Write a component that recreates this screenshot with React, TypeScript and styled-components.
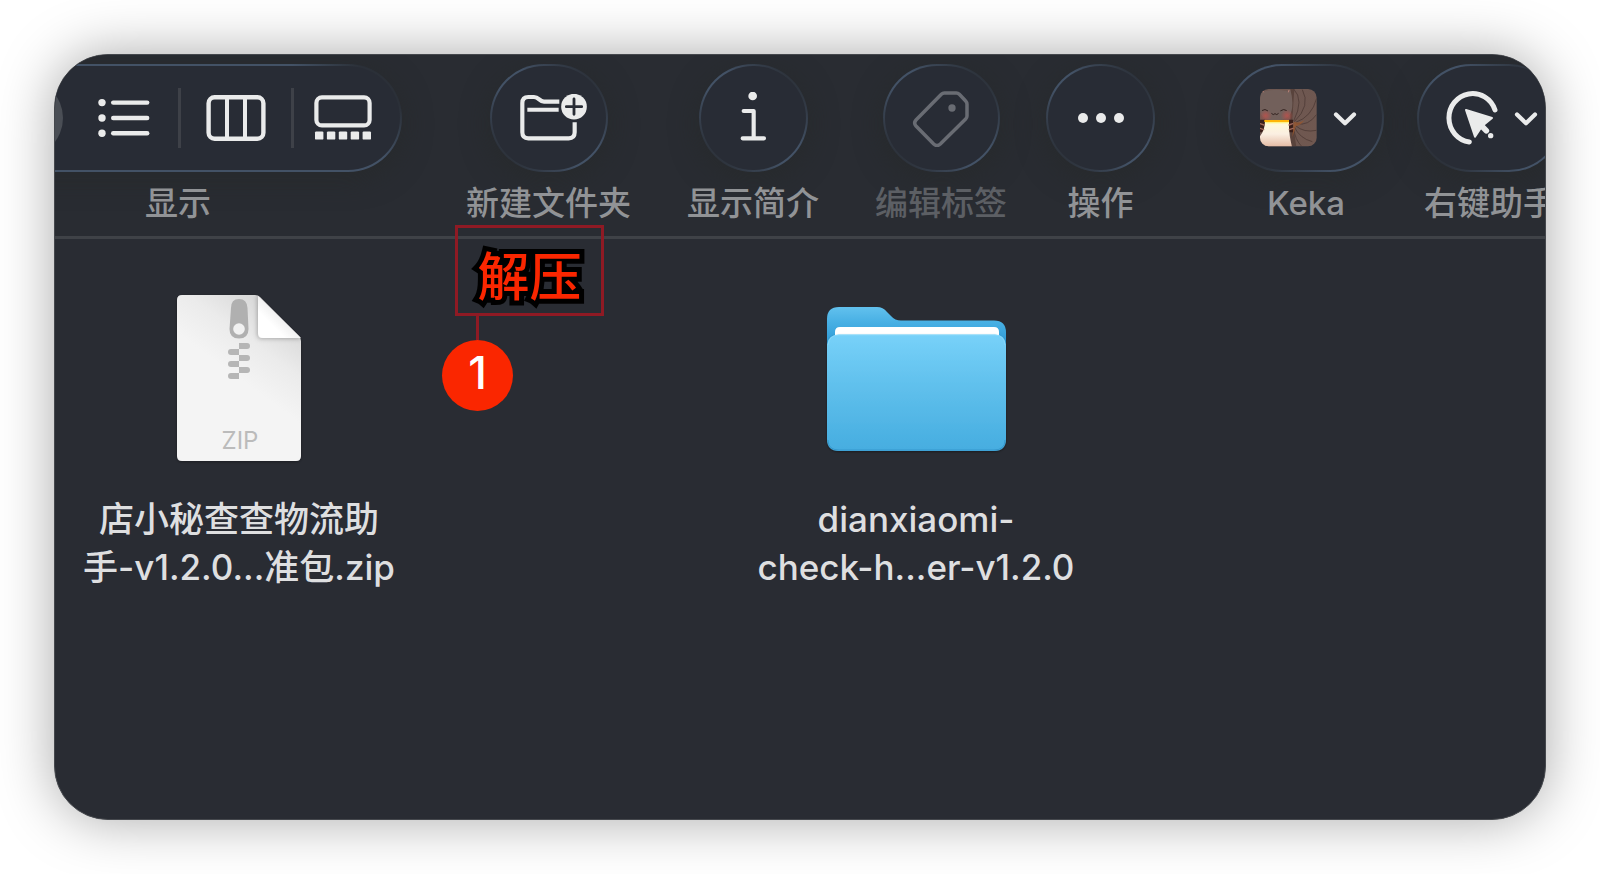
import React from "react";
import styled, { createGlobalStyle } from "styled-components";

const GlobalStyle = createGlobalStyle`
  * { box-sizing: border-box; }
  body {
    margin: 0;
    background: #ffffff;
    font-family: Inter, "Noto Sans CJK SC", sans-serif;
  }
  button {
    border: 0;
    padding: 0;
    margin: 0;
    background: none;
    color: inherit;
    font: inherit;
  }
  svg { display: block; }
`;

const Desktop = styled.div`
  min-height: 100vh;
  padding: 54px;
  display: flex;
  overflow: hidden;
`;

const FinderWindow = styled.main`
  position: relative;
  flex: 1;
  min-width: 0;
  overflow: hidden;
  border: 1px solid #45484d;
  border-radius: 54px;
  background: #292c33;
  box-shadow: 0 0 56px rgba(0, 0, 0, 0.34);
`;

const Toolbar = styled.header`
  display: flex;
  padding: 9px 0 13px;
  border-bottom: 3px solid #3f4247;
  background: #292c32;
`;

const ToolGroup = styled.div<{ $before: number; $dim?: boolean }>`
  flex: none;
  display: flex;
  flex-direction: column;
  align-items: center;
  gap: 11px;
  margin-left: ${(p) => p.$before}px;
  color: ${(p) => (p.$dim ? "#5c5f64" : "#919396")};
`;

const GroupLabel = styled.span`
  font-size: 33px;
  font-weight: 500;
  line-height: 40px;
  white-space: nowrap;
`;

const glass = `
  height: 108px;
  border: 2px solid transparent;
  border-radius: 54px;
  box-shadow: 0 6px 28px rgba(38, 42, 42, 0.7);
  color: #eaebeb;
`;

const glassFill = "linear-gradient(#282c35, #282c35) padding-box";

const GlassButton = styled.button<{ $width: number; $menu?: boolean }>`
  ${glass}
  width: ${(p) => p.$width}px;
  display: flex;
  align-items: center;
  justify-content: center;
  gap: 16px;
  padding-left: ${(p) => (p.$menu ? 4 : 0)}px;
  background: ${glassFill},
    linear-gradient(45deg, #2b3038 12%, #435266 42%, #435266 58%, #2b3038 88%) border-box;
  &:disabled { color: #696c73; }
`;

const ViewSwitch = styled.div`
  ${glass}
  width: 448px;
  display: flex;
  align-items: center;
  padding: 0 9px 0 14px;
  background: ${glassFill},
    linear-gradient(45deg, #435266 80%, #2b3038 92%) border-box;
`;

const Segment = styled.button<{ $width: number; $selected?: boolean }>`
  flex: none;
  width: ${(p) => p.$width}px;
  height: 78px;
  display: flex;
  align-items: center;
  justify-content: center;
  border-radius: 39px;
  margin-right: ${(p) => (p.$selected ? 7 : 0)}px;
  background: ${(p) => (p.$selected ? "#4a4e55" : "transparent")};
`;

const SegmentLine = styled.span`
  flex: none;
  width: 3px;
  height: 60px;
  background: #3e4148;
`;

const Files = styled.section`
  display: flex;
  gap: 357px;
  padding: 56px 24px 24px;
`;

const FileItem = styled.figure`
  flex: none;
  width: 320px;
  margin: 0;
  display: flex;
  flex-direction: column;
  gap: 32px;
`;

const FileIcon = styled.div`
  height: 168px;
  display: flex;
  align-items: center;
  justify-content: center;
`;

const FileName = styled.figcaption`
  color: #dedfe0;
  font-size: 35px;
  font-weight: 500;
  line-height: 48px;
  text-align: center;
  white-space: nowrap;
`;

const Annotation = styled.aside`
  position: absolute;
  left: 387px;
  top: 170px;
  display: flex;
  flex-direction: column;
  align-items: flex-start;
`;

const Callout = styled.div`
  width: 149px;
  height: 91px;
  margin-left: 13px;
  border: 3px solid #8f1a24;
  color: #fa2600;
  font-family: "Noto Sans CJK SC", sans-serif;
  font-size: 52px;
  font-weight: 500;
  line-height: 92px;
  text-align: center;
  white-space: nowrap;
  -webkit-text-stroke: 10px #000000;
  paint-order: stroke fill;
`;

const Stem = styled.div`
  width: 3px;
  height: 24px;
  margin-left: 34px;
  background: #8f1a24;
`;

const StepNumber = styled.div`
  width: 71px;
  height: 71px;
  border-radius: 50%;
  background: #fa2600;
  color: #ffffff;
  font-size: 45px;
  font-weight: 500;
  line-height: 66px;
  text-align: center;
`;

const ListIcon = () => (
  <svg width="52" height="40" viewBox="0 0 52 40" fill="none" stroke="currentColor" strokeWidth="4.4" strokeLinecap="round">
    {[4.6, 20, 35.2].map((y) => (
      <g key={y}>
        <circle cx="4" cy={y} r="3.7" fill="currentColor" stroke="none" />
        <path d={`M15.2 ${y}H49.2`} />
      </g>
    ))}
  </svg>
);

const ColumnsIcon = () => (
  <svg width="60" height="48" viewBox="0 0 60 48" fill="none" stroke="currentColor" strokeWidth="4.4">
    <rect x="2.6" y="3.2" width="54.8" height="41.6" rx="6" />
    <path d="M21 3V45M39 3V45" strokeWidth="4" />
  </svg>
);

const GalleryIcon = () => (
  <svg width="58" height="46" viewBox="0 0 58 46" fill="none" stroke="currentColor" strokeWidth="4.2">
    <rect x="2.4" y="2.4" width="53.2" height="28" rx="5.5" />
    {[1, 12.9, 24.8, 36.7, 48.6].map((x) => (
      <rect key={x} x={x} y="36.4" width="8.4" height="8.2" rx="1.2" fill="currentColor" stroke="none" />
    ))}
  </svg>
);

const NewFolderIcon = () => (
  <svg width="76" height="48" viewBox="213 132 228 144" fill="none" stroke="currentColor" strokeWidth="12.5">
    <path d="M358 155H312C298 155 297 141 282 141H265Q247 141 247 159V247Q247 265 265 265H386Q404 265 404 247V217" />
    <path d="M262 179H356" strokeWidth="12" />
    <circle cx="402" cy="170" r="38.5" fill="currentColor" stroke="none" />
    <path d="M379 170H425M402 147V193" stroke="#282c35" strokeWidth="8.5" strokeLinecap="round" />
  </svg>
);

const InfoIcon = () => (
  <svg width="30" height="52" viewBox="895 126 90 156" fill="none" stroke="currentColor" strokeWidth="12.5" strokeLinecap="round" strokeLinejoin="round">
    <circle cx="939" cy="138" r="13" fill="currentColor" stroke="none" />
    <path d="M912 183H942V265M909 265H973" />
  </svg>
);

const TagIcon = () => (
  <svg width="58" height="58" viewBox="156 117 174 174" fill="none" stroke="currentColor" strokeWidth="10.5">
    <path d="M253 129H289Q294 129 298 133L317 153Q321 157 321 163V198Q321 203 317 207L241 282Q231 291 221 282L168 228Q160 219 168 210L244 133Q248 129 253 129Z" />
    <circle cx="276" cy="174" r="11" fill="currentColor" stroke="none" />
  </svg>
);

const MoreIcon = () => (
  <svg width="46" height="12" viewBox="0 0 46 12" fill="currentColor">
    <circle cx="5" cy="6" r="5" />
    <circle cx="23" cy="6" r="5" />
    <circle cx="41" cy="6" r="5" />
  </svg>
);

const Chevron = () => (
  <svg width="24" height="16" viewBox="0 0 24 16" fill="none" stroke="currentColor" strokeWidth="4.2" strokeLinecap="round" strokeLinejoin="round">
    <path d="M3 4.5L12 13.3L21 4.5" />
  </svg>
);

const KekaIcon = () => (
  <svg width="58" height="58" viewBox="28 28 174 174">
    <defs>
      <clipPath id="kekaClip"><rect x="31" y="28" width="170" height="172" rx="26" /></clipPath>
      <linearGradient id="kekaPaper" x1="0" y1="0" x2="0" y2="1">
        <stop offset="0" stopColor="#fffbd8" />
        <stop offset="0.5" stopColor="#fbefe2" />
        <stop offset="1" stopColor="#e3b9a2" />
      </linearGradient>
      <linearGradient id="kekaTail" x1="0" y1="0" x2="1" y2="1">
        <stop offset="0" stopColor="#6d5751" />
        <stop offset="1" stopColor="#705850" />
      </linearGradient>
      <radialGradient id="kekaCheek">
        <stop offset="0" stopColor="#c0504a" stopOpacity="0.8" />
        <stop offset="1" stopColor="#c0504a" stopOpacity="0" />
      </radialGradient>
    </defs>
    <g clipPath="url(#kekaClip)">
      <rect x="28" y="28" width="174" height="174" fill="url(#kekaTail)" />
      <path d="M128 118L134 28H122V202H140Z" fill="#4b352e" opacity="0.6" />
      <g fill="none" stroke="#4e3b36" strokeWidth="2.5">
        <path d="M132 28Q164 60 132 124" />
        <path d="M158 30Q184 78 134 126" />
        <path d="M201 56Q186 112 138 128" />
        <path d="M201 104Q176 140 140 132" />
        <path d="M201 152Q162 160 138 138" />
        <path d="M188 186Q150 176 134 142" />
        <path d="M156 200Q136 180 132 146" />
      </g>
      <path d="M132 126Q150 132 164 122Q152 138 138 140Q134 160 128 172Z" fill="#9c572b" opacity="0.7" />
      <path d="M31 62Q32 34 46 35Q80 26 114 35L122 30Q132 62 126 92Q120 122 78 122Q32 122 31 92Z" fill="#72605b" />
      <path d="M37 29L42 38M118 31L116 38" stroke="#b98176" strokeWidth="3" />
      <circle cx="48" cy="108" r="19" fill="url(#kekaCheek)" />
      <circle cx="112" cy="108" r="19" fill="url(#kekaCheek)" />
      <g fill="none" stroke="#33221f" strokeWidth="3" strokeLinecap="round">
        <path d="M38 92Q46 86 54 93" />
        <path d="M93 93Q102 86 110 92" />
        <path d="M66 102Q71 108 76 102Q81 108 86 102" />
      </g>
      <path d="M31 120H46V158H31ZM118 120H130V158H118Z" fill="#3a1f1a" />
      <path d="M46 124H118V142Q118 164 127 202H31V170Q46 150 46 124Z" fill="url(#kekaPaper)" />
      <path d="M44 121H118V127H44Z" fill="#ffb508" />
      <path d="M47 128H117V131H47Z" fill="#fff06a" />
      <path d="M31 132L43 136M31 146L42 150M129 132L118 136M130 146L119 150" stroke="#a36b5c" strokeWidth="4" strokeLinecap="round" />
    </g>
  </svg>
);

const PointerIcon = () => (
  <svg width="52" height="54" viewBox="711 123 156 162" fill="none" stroke="currentColor" strokeLinecap="round" strokeLinejoin="round">
    <path d="M858 180A71 73 0 1 0 781 276" strokeWidth="15" />
    <path d="M771 180L849 204L828 221L812 239L798 260Z" fill="currentColor" strokeWidth="6" />
    <path d="M816 226L832 242" strokeWidth="17" />
    <circle cx="845" cy="257" r="8" fill="currentColor" stroke="none" />
  </svg>
);

const ZipIcon = () => (
  <svg width="130" height="174" viewBox="-3 -3 130 174" role="img" aria-label="ZIP">
    <defs>
      <linearGradient id="zipPage" gradientUnits="userSpaceOnUse" x1="60" y1="82" x2="104" y2="22">
        <stop offset="0" stopColor="#f4f4f4" />
        <stop offset="0.5" stopColor="#ebebeb" />
        <stop offset="1" stopColor="#d9d9d9" />
      </linearGradient>
      <linearGradient id="zipFold" x1="0" y1="1" x2="0.5" y2="0.5">
        <stop offset="0" stopColor="#ffffff" />
        <stop offset="0.6" stopColor="#ffffff" />
        <stop offset="1" stopColor="#efefef" />
      </linearGradient>
      <filter id="zipShadow" x="-20%" y="-20%" width="140%" height="140%">
        <feDropShadow dx="0" dy="1" stdDeviation="1.4" floodOpacity="0.35" />
      </filter>
      <filter id="foldShadow" x="-30%" y="-30%" width="160%" height="160%">
        <feDropShadow dx="-1" dy="1" stdDeviation="2" floodOpacity="0.25" />
      </filter>
      <clipPath id="zipClip"><path d="M5 0H80L124 43V161Q124 166 119 166H5Q0 166 0 161V5Q0 0 5 0Z" /></clipPath>
    </defs>
    <path d="M5 0H78Q81 0 83 2L122 41Q124 43 124 46V161Q124 166 119 166H5Q0 166 0 161V5Q0 0 5 0Z" fill="url(#zipPage)" filter="url(#zipShadow)" />
    <g clipPath="url(#zipClip)">
      <path d="M81 -2V38Q81 43 86 43H126Z" fill="url(#zipFold)" filter="url(#foldShadow)" />
    </g>
    <path d="M54 13Q54 4 62 4Q70 4 70.500 13L71.500 34Q71.500 43.500 62 43.500Q52.500 43.500 52.500 34Z" fill="#b0b0b0" />
    <circle cx="62" cy="34" r="5.800" fill="#f1f1f1" />
    <g fill="#b6b6b6">
      {[48, 60, 72].map((y) => (
        <path key={y} d={`M62 ${y}H70Q73 ${y} 73 ${y + 3}Q73 ${y + 6} 70 ${y + 6}H62ZM62 ${y + 6}H54Q51 ${y + 6} 51 ${y + 9}Q51 ${y + 12} 54 ${y + 12}H62Z`} />
      ))}
    </g>
    <text x="63" y="154" fill="#bbbbbb" fontFamily="Inter, sans-serif" fontSize="24" textAnchor="middle">ZIP</text>
  </svg>
);

const FolderIcon = () => (
  <svg width="186" height="150" viewBox="-4 -3 186 150" role="img" aria-label="文件夹">
    <defs>
      <linearGradient id="folderBack" x1="0" y1="0" x2="0" y2="1">
        <stop offset="0" stopColor="#62c1ee" />
        <stop offset="0.25" stopColor="#48b0e4" />
        <stop offset="0.6" stopColor="#2f9bd6" />
      </linearGradient>
      <linearGradient id="folderFront" x1="0" y1="0" x2="0" y2="1">
        <stop offset="0" stopColor="#77d1f9" />
        <stop offset="0.5" stopColor="#5dbeeb" />
        <stop offset="1" stopColor="#46ade0" />
      </linearGradient>
      <filter id="folderShadow" x="-10%" y="-10%" width="120%" height="120%">
        <feDropShadow dx="0" dy="1" stdDeviation="1.2" floodOpacity="0.4" />
      </filter>
    </defs>
    <path d="M0 12Q0 0 12 0H50Q56 0 60 5L64 9Q68 13.500 74 13.500H167Q179 13.500 179 25.500V60H0Z" fill="url(#folderBack)" />
    <path d="M8 40V25Q8 20 13 20H167Q172 20 172 25V40Z" fill="#ffffff" />
    <path d="M0 38Q1 27.500 12 27.500H168Q178 27.500 179 38V132Q179 144 167 144H12Q0 144 0 132Z" fill="url(#folderFront)" filter="url(#folderShadow)" />
    <path d="M1 38Q2 28 12 28H168Q177 28 178 38" fill="none" stroke="#8edcfb" strokeOpacity="0.7" />
    <path d="M1 133Q1 143 12 143H167Q178 143 178 133" fill="none" stroke="#2d8fc4" strokeOpacity="0.7" />
  </svg>
);

export default function App() {
  return (
    <>
      <GlobalStyle />
      <Desktop>
        <FinderWindow>
          <Toolbar>
            <ToolGroup $before={-101}>
              <ViewSwitch role="group" aria-label="显示">
                <Segment type="button" $width={93} $selected aria-label="图标" />
                <Segment type="button" $width={108} aria-label="列表"><ListIcon /></Segment>
                <SegmentLine />
                <Segment type="button" $width={110} aria-label="分栏"><ColumnsIcon /></Segment>
                <SegmentLine />
                <Segment type="button" $width={97} aria-label="画廊"><GalleryIcon /></Segment>
              </ViewSwitch>
              <GroupLabel>显示</GroupLabel>
            </ToolGroup>
            <ToolGroup $before={64}>
              <GlassButton type="button" $width={118} aria-labelledby="new-folder"><NewFolderIcon /></GlassButton>
              <GroupLabel id="new-folder">新建文件夹</GroupLabel>
            </ToolGroup>
            <ToolGroup $before={56}>
              <GlassButton type="button" $width={109} aria-labelledby="get-info"><InfoIcon /></GlassButton>
              <GroupLabel id="get-info">显示简介</GroupLabel>
            </ToolGroup>
            <ToolGroup $before={56} $dim>
              <GlassButton type="button" $width={117} disabled aria-labelledby="edit-tags"><TagIcon /></GlassButton>
              <GroupLabel id="edit-tags">编辑标签</GroupLabel>
            </ToolGroup>
            <ToolGroup $before={39}>
              <GlassButton type="button" $width={109} aria-labelledby="actions"><MoreIcon /></GlassButton>
              <GroupLabel id="actions">操作</GroupLabel>
            </ToolGroup>
            <ToolGroup $before={73}>
              <GlassButton type="button" $width={156} $menu aria-labelledby="keka"><KekaIcon /><Chevron /></GlassButton>
              <GroupLabel id="keka">Keka</GroupLabel>
            </ToolGroup>
            <ToolGroup $before={33}>
              <GlassButton type="button" $width={146} $menu aria-labelledby="right-click"><PointerIcon /><Chevron /></GlassButton>
              <GroupLabel id="right-click">右键助手</GroupLabel>
            </ToolGroup>
          </Toolbar>
          <Files>
            <FileItem>
              <FileIcon><ZipIcon /></FileIcon>
              <FileName>店小秘查查物流助<br />手-v1.2.0...准包.zip</FileName>
            </FileItem>
            <FileItem>
              <FileIcon><FolderIcon /></FileIcon>
              <FileName>dianxiaomi-<br />check-h...er-v1.2.0</FileName>
            </FileItem>
          </Files>
          <Annotation>
            <Callout>解压</Callout>
            <Stem />
            <StepNumber>1</StepNumber>
          </Annotation>
        </FinderWindow>
      </Desktop>
    </>
  );
}
